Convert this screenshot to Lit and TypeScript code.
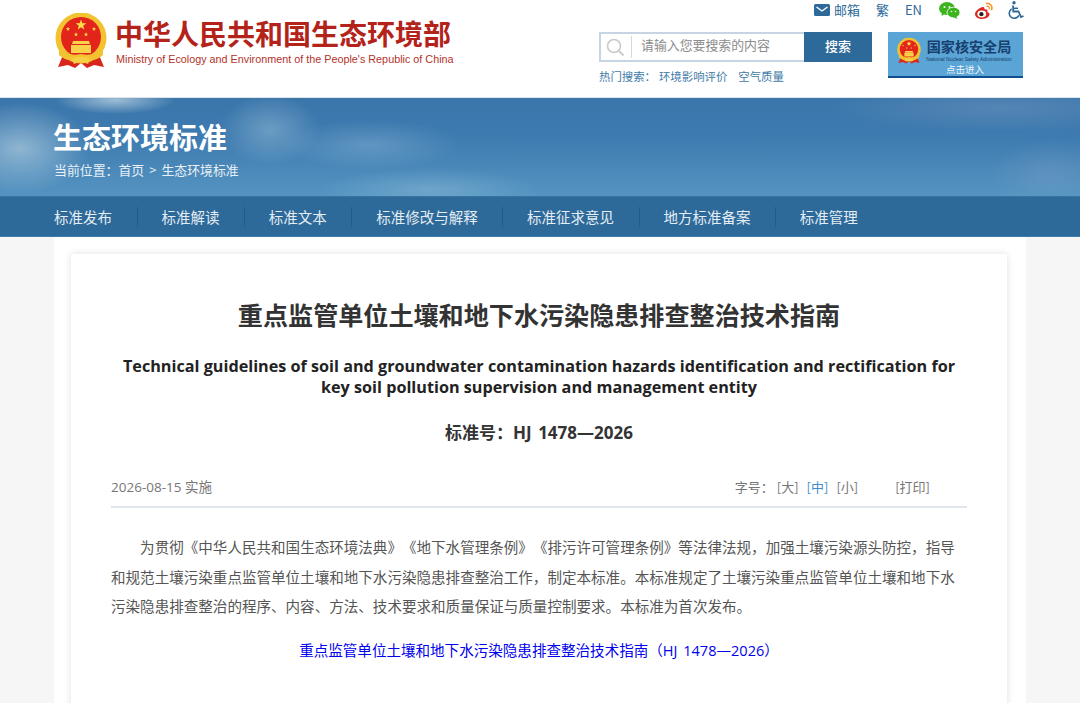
import { LitElement, html, css, svg } from "lit";
import { customElement } from "lit/decorators.js";

const star = (cx: number, cy: number, r: number) => {
  const pts: string[] = [];
  for (let i = 0; i < 10; i++) {
    const a = -Math.PI / 2 + (i * Math.PI) / 5;
    const rr = i % 2 ? r * 0.42 : r;
    pts.push(`${(cx + rr * Math.cos(a)).toFixed(2)},${(cy + rr * Math.sin(a)).toFixed(2)}`);
  }
  return svg`<polygon points=${pts.join(" ")} fill="#fbe04a"/>`;
};

const emblem = (w: number, h: number) => html`<svg class="emblem" width=${w} height=${h} viewBox="0 0 52 56">
  <path d="M8 42 L3 54 L13 52 L20 55 L26 50 L32 55 L39 52 L49 54 L44 42 Z" fill="#d9261c"/>
  <circle cx="26" cy="25" r="25.5" fill="#f2c230"/>
  <circle cx="26" cy="24" r="20" fill="#e3241b"/>
  ${star(26, 12, 5.5)}${star(13, 16, 2.2)}${star(39, 16, 2.2)}${star(21, 21.5, 2.2)}${star(31, 21.5, 2.2)}
  <path d="M18 28 H34 L35 31 H17 Z M16 32 H36 V40 H16 Z" fill="#f7d24a"/>
  <path d="M4 34 Q12 44 26 41 Q40 44 48 34 L48 42 Q40 50 26 46 Q12 50 4 42 Z" fill="#f2c230"/>
  <path d="M17 46 Q26 42 35 46 L33 51 Q26 47 19 51 Z" fill="#f5cf45"/>
</svg>`;

@customElement("app-root")
export class AppRoot extends LitElement {
  static styles = css`
    :host {
      display: block;
      height: 703px;
      overflow: hidden;
      background: #f6f6f6;
      font-family: "Noto Sans CJK SC", "Noto Sans", sans-serif;
      text-spacing-trim: space-all;
      font-feature-settings: "chws" 0, "halt" 0;
    }
    .emblem { display: block; flex: none; }
    header {
      height: 97px;
      background: #fff;
      border-bottom: 1px solid #dde3e9;
      display: flex;
      justify-content: space-between;
      padding: 0 56px 0 55px;
    }
    .logo { display: flex; gap: 8px; padding-top: 13px; height: 56px; }
    .logo-text { display: flex; flex-direction: column; padding-top: 2px; }
    .cn {
      font-size: 28px;
      line-height: 36px;
      font-weight: 700;
      color: #b3231a;
      white-space: nowrap;
    }
    .en {
      font-family: "Liberation Sans", sans-serif;
      font-size: 10.8px;
      line-height: 13px;
      margin: 2px 0 0 1px;
      color: #b3332a;
      white-space: nowrap;
    }
    .right { display: flex; flex-direction: column; width: 425px; }
    .tools {
      display: flex;
      justify-content: flex-end;
      align-items: center;
      height: 20px;
      color: #2e6a99;
      font-size: 13px;
      line-height: 20px;
    }
    .tools span { white-space: nowrap; }
    .tools svg { display: block; flex: none; }
    .mail { margin-right: 4px; }
    .fan { margin-left: 16px; }
    .lang { margin-left: 16px; }
    .wx { margin-left: 17px; }
    .wb { margin-left: 15px; }
    .wc { margin-left: 15px; }
    .row { display: flex; justify-content: space-between; margin-top: 12px; margin-right: 1px; }
    .search-col { display: flex; flex-direction: column; width: 273px; }
    .search {
      display: flex;
      height: 30px;
      box-sizing: border-box;
      border: 2px solid #c6d4e3;
      border-right: 0;
      background: #fff;
      align-items: center;
    }
    .search svg { margin-left: 5px; flex: none; }
    .divider { width: 1px; height: 22px; background: #d8d8d8; margin-left: 6px; }
    .ph {
      font-size: 12.9px;
      line-height: 18px;
      color: #8b8b8b;
      margin: -5px 0 0 9px;
      flex: 1;
      white-space: nowrap;
    }
    .btn {
      width: 68px;
      height: 30px;
      margin: -2px 0;
      background: #2e6a99;
      color: #fff;
      font-size: 13px;
      font-weight: 500;
      line-height: 28px;
      text-align: center;
      flex: none;
    }
    .hot {
      display: flex;
      font-size: 11.4px;
      line-height: 16px;
      margin-top: 6px;
      color: #3f7ba8;
      white-space: nowrap;
    }
    .hot .h1 { margin-right: 3px; }
    .hot .h2 { margin-right: 11px; }
    .nnsa {
      width: 135px;
      height: 46px;
      box-sizing: border-box;
      background: #5ba5d6;
      border-bottom: 2px solid #0f4f90;
      display: flex;
      padding: 5px 0 0 9px;
      gap: 5px;
    }
    .nnsa-text { display: flex; flex-direction: column; align-items: center; width: 86px; }
    .nnsa .t1 { font-size: 14.1px; line-height: 18px; font-weight: 700; color: #17406e; white-space: nowrap; }
    .nnsa .t2 { font-family: "Liberation Sans", sans-serif; font-size: 5px; line-height: 6px; color: #173e6b; white-space: nowrap; margin-top: 1px; }
    .nnsa .t3 { font-size: 9.5px; line-height: 12px; color: #eef6fb; white-space: nowrap; margin: 1px 8px 0 0; }

    .banner {
      height: 98px;
      box-sizing: border-box;
      padding: 21px 54px 0;
      background:
        radial-gradient(ellipse 70px 45px at 20px 148px, rgba(190, 215, 228, 0.62), transparent),
        radial-gradient(ellipse 60px 14px at 115px 100px, rgba(200, 220, 230, 0.7), transparent),
        radial-gradient(ellipse 50px 35px at 270px 130px, rgba(170, 205, 222, 0.42), transparent),
        radial-gradient(ellipse 90px 25px at 370px 145px, rgba(160, 200, 225, 0.32), transparent),
        radial-gradient(ellipse 110px 22px at 430px 190px, rgba(170, 210, 230, 0.3), transparent),
        radial-gradient(ellipse 60px 35px at 1050px 175px, rgba(135, 165, 200, 0.3), transparent),
        radial-gradient(ellipse 170px 24px at 1000px 108px, rgba(130, 160, 195, 0.35), transparent),
        linear-gradient(180deg, #3b76ab 0%, #3e7bb0 40%, #5594c1 100%);
      background-attachment: fixed, fixed, fixed, fixed, fixed, fixed, fixed, scroll;
      color: #fff;
    }
    .banner h2 {
      margin: 0 0 0 -1px;
      font-size: 29px;
      line-height: 34px;
      font-weight: 700;
      color: #fff;
    }
    .crumb { font-size: 12.9px; line-height: 18px; margin-top: 8px; color: #e8f0f6; white-space: nowrap; }
    .crumb .gt { margin: 0 5px; }
    nav {
      height: 41px;
      box-sizing: border-box;
      background: #2e6a99;
      border-top: 1px solid #3a739f;
      border-bottom: 1px solid #3f7ba8;
      padding-left: 54px;
      display: flex;
      align-items: center;
      color: #e4edf4;
      font-size: 14.5px;
    }
    nav span {
      height: 20px;
      line-height: 20px;
      padding-right: 24.6px;
      margin-right: 23.8px;
      border-right: 1px solid #26597f;
      white-space: nowrap;
    }
    nav span:last-child { border-right: 0; }
    main {
      width: 972px;
      margin-left: 54px;
      background: #fff;
      padding: 17px 0 0 17px;
      box-sizing: border-box;
      height: 466px;
    }
    .card {
      width: 936px;
      height: 600px;
      box-sizing: border-box;
      background: #fff;
      border-radius: 2px;
      box-shadow: 0 0 7px rgba(0, 0, 0, 0.13);
      padding: 41px 40px 0;
      color: #333;
    }
    h1 {
      margin: 0;
      text-align: center;
      font-size: 25.1px;
      line-height: 38px;
      font-weight: 700;
      color: #333;
    }
    .etitle {
      margin: 23px 0 0;
      text-align: center;
      font-family: "Open Sans", "Noto Sans", sans-serif;
      font-size: 16.2px;
      line-height: 21px;
      font-weight: 700;
      color: #222;
    }
    .no {
      margin-top: 23px;
      text-align: center;
      font-family: "Open Sans", "Noto Sans CJK SC", sans-serif;
      font-size: 17px;
      line-height: 24px;
      font-weight: 700;
      word-spacing: 2px;
      color: #333;
    }
    .meta {
      display: flex;
      justify-content: space-between;
      margin-top: 30px;
      height: 24px;
      padding-bottom: 7px;
      border-bottom: 2px solid #dfe6ee;
      font-size: 13px;
      line-height: 24px;
      color: #777;
    }
    .meta .date { font-family: "Open Sans", "Noto Sans CJK SC", sans-serif; font-size: 13.5px; }
    .size { display: flex; white-space: nowrap; padding-right: 37px; }
    .size span { margin-left: 8px; }
    .size .lab { margin-left: 0; margin-right: -5px; }
    .size .on { color: #3f8fd0; }
    .size .print { margin-left: 37px; }
    .body {
      margin: 24px 6px 0 0;
      font-size: 14.56px;
      line-height: 29.5px;
      text-indent: 2em;
      color: #555;
      text-align: left;
    }
    .link {
      margin-top: 14px;
      text-align: center;
      font-family: "Open Sans", "Noto Sans CJK SC", sans-serif;
      font-size: 14.56px;
      line-height: 30px;
      word-spacing: 2px;
      color: #0000ee;
    }
  `;

  render() {
    return html`
      <header>
        <div class="logo">
          ${emblem(52, 56)}
          <div class="logo-text">
            <div class="cn">中华人民共和国生态环境部</div>
            <div class="en">Ministry of Ecology and Environment of the People's Republic of China</div>
          </div>
        </div>
        <div class="right">
          <div class="tools">
            <svg class="mail" width="16" height="12" viewBox="0 0 16 12"><rect width="16" height="12" rx="1.5" fill="#2e6a99"/><path d="M2.5 3 L8 7 L13.5 3" fill="none" stroke="#fff" stroke-width="1.4"/></svg>
            <span>邮箱</span>
            <span class="fan">繁</span>
            <span class="lang">EN</span>
            <svg class="wx" width="21" height="17" viewBox="0 0 21 17"><ellipse cx="8" cy="6.5" rx="8" ry="6.5" fill="#3cb41e"/><path d="M3 10 L2.5 14 L7 11 Z" fill="#3cb41e"/><ellipse cx="14.5" cy="10.5" rx="6.5" ry="5.3" fill="#3cb41e" stroke="#fff" stroke-width="0.8"/><path d="M17 14 L18.5 17 L14 15 Z" fill="#3cb41e"/><circle cx="5.5" cy="5" r="1" fill="#fff"/><circle cx="10.5" cy="5" r="1" fill="#fff"/><circle cx="12.5" cy="9.5" r=".8" fill="#fff"/><circle cx="16.5" cy="9.5" r=".8" fill="#fff"/></svg>
            <svg class="wb" width="18" height="17" viewBox="0 0 18 17"><path d="M7.5 5 C3.5 6 0 9.5 0 12 C0 15 3.5 17 7.5 17 C11.5 17 14.5 14.5 14.5 12.3 C14.5 10.8 13 10.3 12.3 10 C13 8 12 6.8 9.5 7.3 C9.7 5.5 9 4.6 7.5 5 Z" fill="#dc2a20"/><ellipse cx="6.8" cy="12" rx="4.4" ry="3.4" fill="#fff"/><circle cx="6.4" cy="12.2" r="2.1" fill="#222"/><path d="M11.5 1.5 C15 0.8 17.8 4 16.6 7.5" fill="none" stroke="#f0972b" stroke-width="1.6" stroke-linecap="round"/><path d="M12 4.3 C13.5 4 14.8 5.3 14.2 6.8" fill="none" stroke="#f0972b" stroke-width="1.3" stroke-linecap="round"/></svg>
            <svg class="wc" width="16" height="18" viewBox="0 0 16 18"><circle cx="6" cy="1.8" r="1.7" fill="#2e6a99"/><path d="M5 4.5 L5.3 10.5 H10.5 L13 16 L15.5 15" fill="none" stroke="#2e6a99" stroke-width="1.8"/><path d="M5.5 7.3 H10" stroke="#2e6a99" stroke-width="1.5"/><path d="M3.6 8 A5 5 0 1 0 10.8 14.3" fill="none" stroke="#2e6a99" stroke-width="1.6"/></svg>
          </div>
          <div class="row">
            <div class="search-col">
              <div class="search">
                <svg width="19" height="19" viewBox="0 0 19 19"><circle cx="8" cy="8" r="6.5" fill="none" stroke="#c9c9c9" stroke-width="1.6"/><path d="M13 13 L17.5 17.5" stroke="#c9c9c9" stroke-width="1.8"/></svg>
                <div class="divider"></div>
                <div class="ph">请输入您要搜索的内容</div>
                <div class="btn">搜索</div>
              </div>
              <div class="hot">
                <span class="h1">热门搜索：</span><span class="h2">环境影响评价</span><span>空气质量</span>
              </div>
            </div>
            <div class="nnsa">
              ${emblem(24, 28)}
              <div class="nnsa-text">
                <div class="t1">国家核安全局</div>
                <div class="t2">National Nuclear Safety Administration</div>
                <div class="t3">点击进入</div>
              </div>
            </div>
          </div>
        </div>
      </header>
      <section class="banner">
        <h2>生态环境标准</h2>
        <div class="crumb">当前位置：首页<span class="gt">&gt;</span>生态环境标准</div>
      </section>
      <nav>
        <span>标准发布</span><span>标准解读</span><span>标准文本</span><span>标准修改与解释</span><span>标准征求意见</span><span>地方标准备案</span><span>标准管理</span>
      </nav>
      <main>
        <article class="card">
          <h1>重点监管单位土壤和地下水污染隐患排查整治技术指南</h1>
          <p class="etitle">Technical guidelines of soil and groundwater contamination hazards identification and rectification for key soil pollution supervision and management entity</p>
          <div class="no">标准号：HJ 1478—2026</div>
          <div class="meta">
            <div class="date">2026-08-15 实施</div>
            <div class="size"><span class="lab">字号：</span><span>[大]</span><span class="on">[中]</span><span>[小]</span><span class="print">[打印]</span></div>
          </div>
          <p class="body">为贯彻《中华人民共和国生态环境法典》《地下水管理条例》《排污许可管理条例》等法律法规，加强土壤污染源头防控，指导和规范土壤污染重点监管单位土壤和地下水污染隐患排查整治工作，制定本标准。本标准规定了土壤污染重点监管单位土壤和地下水污染隐患排查整治的程序、内容、方法、技术要求和质量保证与质量控制要求。本标准为首次发布。</p>
          <div class="link">重点监管单位土壤和地下水污染隐患排查整治技术指南（HJ 1478—2026）</div>
        </article>
      </main>
    `;
  }
}
